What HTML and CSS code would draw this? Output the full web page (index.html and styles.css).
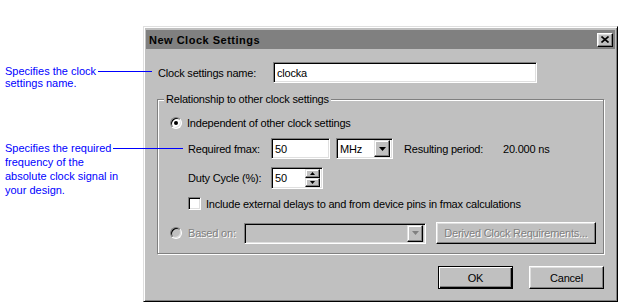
FILE: index.html
```html
<!DOCTYPE html>
<html lang="en">
<head>
    <meta charset="UTF-8">
    <title>New Clock Settings</title>
    <link rel="stylesheet" href="styles.css">
</head>
<body>
    <div class="page">
        <div class="notes">
            <div class="note note-name">
                <div class="note-line"><span>Specifies the clock</span><i class="leader"></i></div>
                <div>settings name.</div>
            </div>
            <div class="note note-fmax">
                <div class="note-line"><span>Specifies the required</span><i class="leader"></i></div>
                <div>frequency of the</div>
                <div>absolute clock signal in</div>
                <div>your design.</div>
            </div>
        </div>

        <div class="dialog">
            <div class="titlebar">
                <span class="title">New Clock Settings</span>
                <button class="close-btn">
                    <svg width="8" height="7" viewBox="0 0 8 7"><path d="M0.5 0.5l7 6M7.5 0.5l-7 6" stroke="#000" stroke-width="1.6" fill="none"/></svg>
                </button>
            </div>

            <div class="dialog-body">
                <div class="name-row">
                    <label class="name-label">Clock settings name:</label>
                    <div class="field name-field">clocka</div>
                </div>

                <fieldset class="group">
                    <legend>Relationship to other clock settings</legend>

                    <div class="opt-row">
                        <span class="radio checked"></span>
                        <span>Independent of other clock settings</span>
                    </div>

                    <div class="sub-row fmax-row">
                        <label class="sub-label">Required fmax:</label>
                        <div class="field fmax-field">50</div>
                        <div class="field select-field">
                            <span>MHz</span>
                            <span class="arrow-btn">
                                <svg width="7" height="4" viewBox="0 0 7 4"><path d="M0 0h7L3.5 4z" fill="#000"/></svg>
                            </span>
                        </div>
                        <span class="period-label">Resulting period:</span>
                        <span>20.000 ns</span>
                    </div>

                    <div class="sub-row duty-row">
                        <label class="sub-label">Duty Cycle (%):</label>
                        <div class="field spin-field">
                            <span>50</span>
                            <span class="spin">
                                <span class="spin-btn"><svg width="5" height="3" viewBox="0 0 5 3"><path d="M2.5 0L5 3H0z" fill="#000"/></svg></span>
                                <span class="spin-btn"><svg width="5" height="3" viewBox="0 0 5 3"><path d="M0 0h5L2.5 3z" fill="#000"/></svg></span>
                            </span>
                        </div>
                    </div>

                    <div class="sub-row check-row">
                        <span class="checkbox"></span>
                        <span>Include external delays to and from device pins in fmax calculations</span>
                    </div>

                    <div class="opt-row based-row">
                        <span class="radio disabled"></span>
                        <span class="based-label disabled-text">Based on:</span>
                        <div class="field combo-field">
                            <span class="arrow-btn">
                                <svg width="7" height="4" viewBox="0 0 7 4"><path d="M0 0h7L3.5 4z" fill="#808080"/></svg>
                            </span>
                        </div>
                        <button class="btn derived-btn disabled-text">Derived Clock Requirements...</button>
                    </div>
                </fieldset>

                <div class="actions">
                    <button class="btn btn-default">OK</button>
                    <button class="btn">Cancel</button>
                </div>
            </div>
        </div>
    </div>
</body>
</html>
```

FILE: styles.css
```css
body {
    margin: 0;
    background: #fff;
    font-family: "Liberation Sans", Arial, sans-serif;
    font-size: 11px;
    color: #000;
}
.page {
    display: flex;
    padding-top: 26px;
}

/* callouts on the left */
.notes {
    width: 143px;
    flex: none;
    color: #0000ff;
}
.note {
    padding-left: 5px;
}
.note-name {
    margin-top: 39px;
    line-height: 12px;
}
.note-fmax {
    margin-top: 52px;
    line-height: 14px;
}
.note-line {
    display: flex;
    align-items: center;
}
.leader {
    flex: 1;
    height: 1px;
    margin-left: 2px;
    background: #0000ff;
    position: relative;
    z-index: 1;
}
.note-name .leader {
    margin-right: -9px;
}
.note-fmax .leader {
    margin-right: -40px;
}

/* dialog window */
.dialog {
    width: 475px;
    height: 276px;
    box-sizing: border-box;
    padding: 3px 2px 2px;
    background: #c0c0c0;
    border: 1px solid;
    border-color: #dfdfdf #000 #000 #dfdfdf;
    box-shadow: inset 1px 1px #fff, inset -1px -1px #808080;
    letter-spacing: -0.2px;
}
.titlebar {
    height: 19px;
    padding: 0 2px 0 3px;
    background: #808080;
    display: flex;
    align-items: center;
    justify-content: space-between;
}
.title {
    font-weight: bold;
    font-size: 11px;
    letter-spacing: 0.5px;
}
.close-btn {
    width: 16px;
    height: 14px;
    padding: 0;
    box-sizing: border-box;
    background: #c0c0c0;
    border: 1px solid;
    border-color: #fff #000 #000 #fff;
    box-shadow: inset -1px -1px #808080, inset 1px 1px #dfdfdf;
    display: flex;
    align-items: center;
    justify-content: center;
}
.dialog-body {
    padding: 0 11px;
}

/* sunken edit boxes */
.field {
    box-sizing: border-box;
    height: 21px;
    padding: 0 3px;
    background: #fff;
    border: 1px solid;
    border-color: #808080 #fff #fff #808080;
    box-shadow: inset 1px 1px #000, inset -1px -1px #dfdfdf;
    display: flex;
    align-items: center;
}
.name-row {
    margin-top: 13px;
    display: flex;
    align-items: center;
}
.name-label {
    width: 115px;
    margin-left: 1px;
}
.name-field {
    width: 264px;
}

/* group box */
.group {
    margin: 10px 0 0;
    padding: 10px 0 9px;
    min-width: 0;
    border: 1px solid #808080;
    box-shadow: 1px 1px #fff, inset 1px 1px #fff;
}
.group legend {
    margin-left: 6px;
    padding: 0 2px;
    line-height: 13px;
    background: #c0c0c0;
}
.opt-row {
    display: flex;
    align-items: center;
    height: 13px;
    margin-left: 12px;
    gap: 5px;
}
.sub-row {
    display: flex;
    align-items: center;
    margin-left: 30px;
}
.sub-label {
    width: 83px;
}
.fmax-row {
    margin-top: 9px;
}
.fmax-field {
    width: 59px;
}
.select-field {
    width: 57px;
    margin-left: 6px;
    padding: 2px 2px 2px 3px;
    justify-content: space-between;
}
.arrow-btn {
    width: 16px;
    height: 17px;
    box-sizing: border-box;
    background: #c0c0c0;
    border: 1px solid;
    border-color: #dfdfdf #000 #000 #dfdfdf;
    box-shadow: inset -1px -1px #808080, inset 1px 1px #fff;
    display: flex;
    align-items: center;
    justify-content: center;
}
.period-label {
    width: 99px;
    margin-left: 11px;
}
.duty-row {
    margin-top: 8px;
}
.spin-field {
    width: 52px;
    height: 22px;
    padding: 2px 2px 2px 3px;
    justify-content: space-between;
}
.spin {
    display: flex;
    flex-direction: column;
    height: 18px;
}
.spin-btn {
    width: 15px;
    height: 9px;
    box-sizing: border-box;
    background: #c0c0c0;
    border: 1px solid;
    border-color: #dfdfdf #000 #000 #dfdfdf;
    box-shadow: inset -1px -1px #808080, inset 1px 1px #fff;
    display: flex;
    align-items: center;
    justify-content: center;
}
.check-row {
    margin-top: 8px;
    height: 13px;
    gap: 5px;
}
.checkbox {
    width: 13px;
    height: 13px;
    box-sizing: border-box;
    background: #fff;
    border: 1px solid;
    border-color: #808080 #fff #fff #808080;
    box-shadow: inset 1px 1px #000, inset -1px -1px #dfdfdf;
}
.radio {
    width: 12px;
    height: 12px;
    box-sizing: border-box;
    border-radius: 50%;
    background: #fff;
    border: 1px solid;
    border-color: #808080 #fff #fff #808080;
    box-shadow: inset 1px 1px #000, inset -1px -1px #dfdfdf;
    display: flex;
    align-items: center;
    justify-content: center;
}
.radio.checked::after {
    content: "";
    width: 4px;
    height: 4px;
    border-radius: 50%;
    background: #000;
}
.radio.disabled {
    background: #c0c0c0;
}
.disabled-text {
    color: #808080;
    text-shadow: 1px 1px #fff;
}
.based-row {
    margin-top: 12px;
    height: 22px;
}
.based-label {
    width: 51px;
    margin-left: 1px;
}
.combo-field {
    width: 182px;
    height: 21px;
    padding: 2px;
    background: #c0c0c0;
    justify-content: flex-end;
}

/* push buttons */
.btn {
    height: 23px;
    padding: 0;
    box-sizing: border-box;
    font-family: "Liberation Sans", Arial, sans-serif;
    font-size: 11px;
    letter-spacing: -0.2px;
    color: #000;
    background: #c0c0c0;
    border: 1px solid;
    border-color: #fff #000 #000 #fff;
    box-shadow: inset -1px -1px #808080, inset 1px 1px #dfdfdf;
}
.derived-btn {
    width: 160px;
    height: 22px;
    margin-left: 5px;
    color: #808080;
}
.actions {
    margin-top: 12px;
    display: flex;
    justify-content: flex-end;
    gap: 16px;
}
.actions .btn {
    width: 75px;
}
.btn-default {
    border-color: #000;
    box-shadow: inset 1px 1px #fff, inset -1px -1px #000, inset -2px -2px #808080;
}
```
